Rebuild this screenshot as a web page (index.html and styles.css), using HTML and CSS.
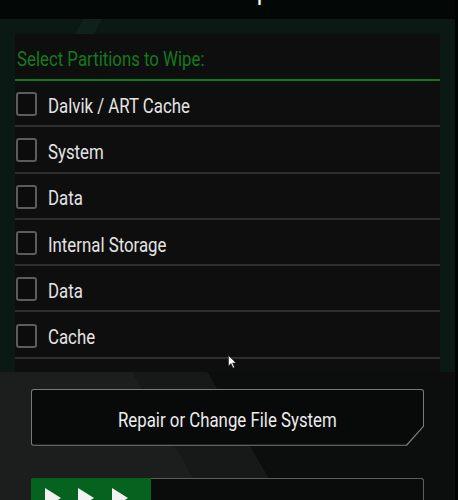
FILE: index.html
```html
<!DOCTYPE html>
<html>
<head>
<meta charset="utf-8">
<title>Wipe</title>
<link rel="stylesheet" href="styles.css">
</head>
<body>
<div class="screen">

  <header class="topbar">
    <div class="topbar-inner">
      <span class="back">&#8617;</span>
      <span class="title">Advanced Wipe</span>
    </div>
  </header>

  <section class="wipe-area">
    <div class="panel">
      <div class="panel-head"><span class="narrow">Select Partitions to Wipe:</span></div>
      <ul class="parts">
        <li><span class="box"></span><span class="narrow">Dalvik / ART Cache</span></li>
        <li><span class="box"></span><span class="narrow">System</span></li>
        <li><span class="box"></span><span class="narrow">Data</span></li>
        <li><span class="box"></span><span class="narrow">Internal Storage</span></li>
        <li><span class="box"></span><span class="narrow">Data</span></li>
        <li><span class="box"></span><span class="narrow">Cache</span></li>
      </ul>
    </div>
  </section>

  <section class="actions">
    <div class="btn-frame">
      <div class="btn"><span class="narrow center">Repair or Change File System</span></div>
    </div>
    <div class="slider">
      <div class="knob">
        <svg width="100" height="20" viewBox="0 0 100 20">
          <polygon points="0,0 16,10 0,20" fill="#f2f2f2"/>
          <polygon points="33,0 49,10 33,20" fill="#f2f2f2"/>
          <polygon points="67,0 83,10 67,20" fill="#f2f2f2"/>
        </svg>
      </div>
    </div>
  </section>

  <svg class="cursor" width="9" height="14" viewBox="0 0 9 14">
    <polygon points="0.5,0.5 0.5,11 3,8.5 5,13 6.5,12.3 4.6,8 8,8" fill="#fff" stroke="#222" stroke-width="0.6"/>
  </svg>
</div>
</body>
</html>
```

FILE: styles.css
```css
html, body {
	margin: 0;
	padding: 0;
}
body {
	background: #030605;
	font-family: Roboto, "Liberation Sans", sans-serif;
	color: #e6e6e6;
}

.screen {
	position: relative;
	width: 455px;
	height: 500px;
	overflow: hidden;
	border-right: 3px solid #020403;
}

/* condensed look for the recovery font */
.narrow {
	display: inline-block;
	white-space: nowrap;
	transform: scaleX(0.82);
	transform-origin: left center;
}
.narrow.center {
	transform-origin: center center;
}

/* top bar, title is mostly scrolled out of view */
.topbar {
	height: 19px;
	overflow: hidden;
	background: #030806;
}
.topbar-inner {
	margin-top: -21px;
	display: flex;
	align-items: center;
	gap: 60px;
	padding-left: 38px;
	font-size: 24px;
	color: #fff;
	line-height: 26px;
}

/* partition list */
.wipe-area {
	background: #0a1914;
	background-image: linear-gradient(118deg, transparent 0 18%, #0f211b 18% 22%, transparent 22%);
	background-size: 100% 15px;
	background-repeat: no-repeat;
	padding: 15px 15px 0 15px;
}
.panel {
	background: #0e0e0e;
	height: 338px;
}
.panel-head {
	height: 47px;
	border-bottom: 2px solid #117a1c;
	color: #137a1e;
	font-size: 20.5px;
	display: flex;
	align-items: center;
	padding-left: 2px;
	padding-top: 4px;
	box-sizing: border-box;
}
.parts {
	list-style: none;
	margin: 0;
	padding: 0;
}
.parts li {
	height: 44.3px;
	border-bottom: 2px solid #2d302f;
	display: flex;
	align-items: center;
	gap: 11px;
	font-size: 20.5px;
	color: #e4e4e4;
}
.parts li .narrow {
	margin-top: 5px;
}
.box {
	flex: none;
	width: 17px;
	height: 20px;
	margin: 2px 0 0 1px;
	border: 2px solid #5c5c5c;
	border-radius: 3px;
	background: #0c0c0c;
}

/* buttons */
.actions {
	height: 128px;
	padding: 17px 31px 0 31px;
	display: flex;
	flex-direction: column;
	gap: 32px;
	background: linear-gradient(60deg, #1b1e1d 0 40%, #161918 40% 54%, #0c0e0e 54%);
}
.btn-frame {
	height: 59px;
	padding: 1px;
	box-sizing: border-box;
	background: #7a7a7a;
	border-radius: 3px;
	clip-path: polygon(0 0, 100% 0, 100% 66%, calc(100% - 17px) 100%, 0 100%);
}
.btn {
	height: 100%;
	background: #080909;
	border-radius: 2px;
	clip-path: polygon(0 0, 100% 0, 100% 66%, calc(100% - 17px) 100%, 0 100%);
	display: flex;
	align-items: center;
	justify-content: center;
	padding-top: 5px;
	box-sizing: border-box;
	font-size: 20.5px;
	color: #ececec;
}
.slider {
	height: 40px;
	border: 1px solid #5d5d5d;
	border-bottom: none;
	border-radius: 3px 3px 0 0;
	background: #0a0b0b;
	display: flex;
}
.knob {
	width: 120px;
	margin: -1px 0 0 -1px;
	background: #06621f;
	border-radius: 3px 0 0 0;
	padding: 10px 0 0 14px;
	box-sizing: border-box;
}
.knob svg {
	display: block;
}

.cursor {
	position: absolute;
	left: 228px;
	top: 355px;
}
```
